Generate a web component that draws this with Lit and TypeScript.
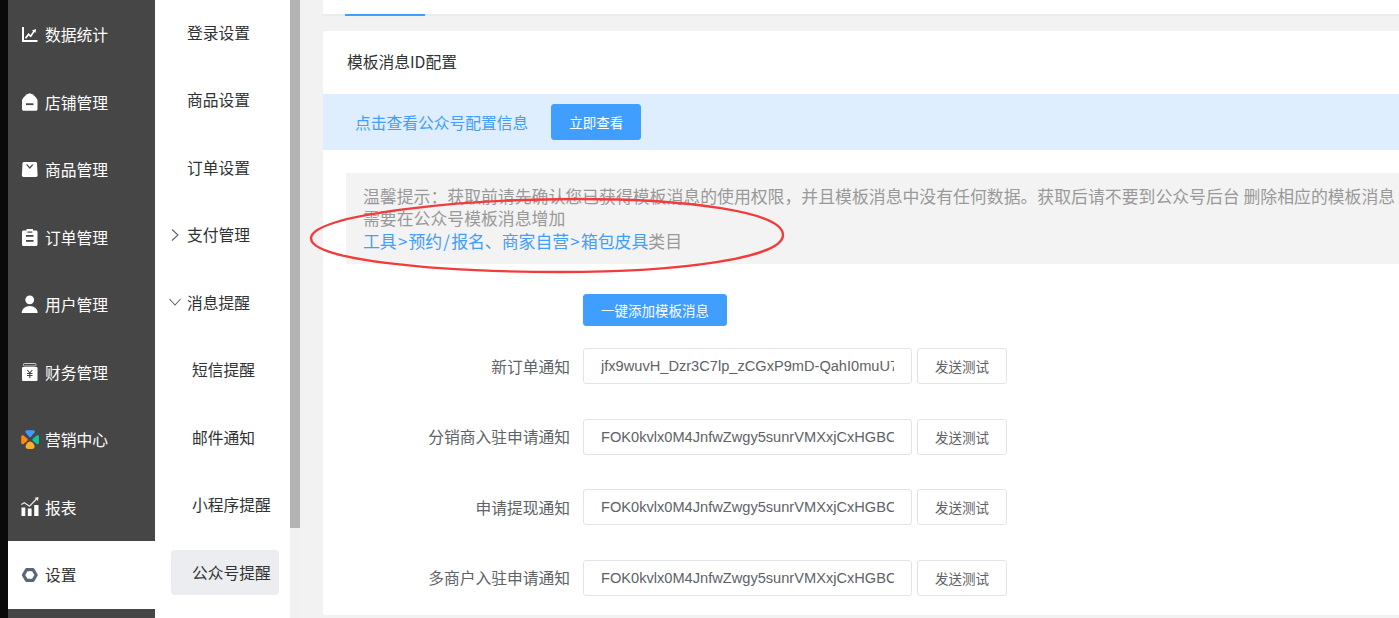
import { LitElement, html, css, svg } from "lit";
import { customElement } from "lit/decorators.js";

const icons: Record<string, unknown> = {
  chart: svg`<path d="M1 2v15h15.500v-2H3V2z" fill="#fff"/><path d="M4 12.500L7.500 8l2 2L12 6.500 11 5.500 15 4l-.5 4-1-1-3.700 5.500-2-2L5 14z" fill="#fff"/>`,
  store: svg`<path d="M8.700 1.200C5 2.200 2.500 5 1 8v9c0 1 .8 1.800 1.700 1.800h12c1 0 1.800-.8 1.800-1.800V8C15 5 12.500 2.200 8.700 1.200z" fill="#fff"/><rect x="5" y="11.300" width="7.500" height="1.800" fill="#464646"/>`,
  box: svg`<path d="M3 2h11.500c.8 0 1.300.6 1.500 1.300l.6 12c0 1-.7 1.700-1.600 1.700H2.500c-.9 0-1.600-.7-1.600-1.700l.6-12C1.700 2.600 2.200 2 3 2z" fill="#fff"/><path d="M5 4.500h1.600L8.800 7l2.200-2.500h1.600L8.800 9z" fill="#464646"/>`,
  clip: svg`<path d="M5.500 2h6.500v1.500h3c.9 0 1.500.7 1.500 1.500v12.500c0 .9-.6 1.500-1.500 1.500H2.500c-.9 0-1.500-.6-1.500-1.500V5c0-.8.600-1.500 1.500-1.500h3z" fill="#fff"/><rect x="5" y="8" width="7.500" height="1.800" fill="#464646"/><rect x="5" y="13" width="7.500" height="1.800" fill="#464646"/><rect x="6.300" y="4.500" width="5" height="1.200" fill="#464646"/>`,
  user: svg`<circle cx="8.700" cy="4.800" r="4.400" fill="#fff"/><path d="M.7 18c0-4 3.500-7 8-7s8 3 8 7z" fill="#fff"/>`,
  fin: svg`<rect x="2.500" y="1.500" width="12.500" height="2.500" rx=".8" fill="none" stroke="#cfcfcf" stroke-width="1"/><rect x="1" y="5" width="15.500" height="14" rx="1" fill="#fff"/><path d="M6.300 8l2.500 3 2.500-3M6 11.500h5.500M6 13.500h5.500M8.800 11v5" fill="none" stroke="#464646" stroke-width="1.100"/>`,
  mkt: svg`<path d="M6 .2h6.200c1.500 0 2 1.300 1.300 2.400L10.300 6.600c-.7.800-1.800.8-2.500 0L4.700 2.600C4 1.500 4.500.2 6 .2z" fill="#3f9bff"/><path d="M.2 6.800v5.800c0 1.500 1.300 2 2.300 1.300l3.700-3c.8-.7.800-1.800 0-2.400L2.500 5.500C1.500 4.800.2 5.300.2 6.800z" fill="#ff8a12"/><path d="M18 6.800v5.800c0 1.500-1.300 2-2.300 1.300l-3.700-3c-.8-.7-.8-1.800 0-2.400l3.700-3c1-.7 2.300-.2 2.300 1.300z" fill="#10c5a0"/><path d="M9.100 11.500c-2 0-4.500 3-4.500 5 0 1.700 1.200 2.500 2.500 2.500h4c1.300 0 2.500-.8 2.500-2.500 0-2-2.500-5-4.500-5z" fill="#ffad2e"/>`,
  rep: svg`<rect x=".5" y="10.500" width="3.800" height="8.500" fill="#fff"/><rect x="6.800" y="11.500" width="3.800" height="7.500" fill="#fff"/><rect x="13.200" y="8" width="4.300" height="11" fill="#fff"/><path d="M.3 7.500l3-1.800 5.200 3.500L15.500 2" fill="none" stroke="#e8e8e8" stroke-width="1.300"/><path d="M13.500.8L17.500 0l-.5 4z" fill="#e8e8e8"/>`,
  gear: svg`<path d="M2.400 10l3.200-5.300h6.400L15.200 10 12 15.300H5.600z" fill="none" stroke="#5b6776" stroke-width="3.200" stroke-linejoin="round"/>`,
};

const menu = [
  ["chart", "数据统计"], ["store", "店铺管理"], ["box", "商品管理"], ["clip", "订单管理"], ["user", "用户管理"],
  ["fin", "财务管理"], ["mkt", "营销中心"], ["rep", "报表"], ["gear", "设置"],
];
const sub: [string, string, string][] = [
  ["登录设置", "", ""], ["商品设置", "", ""], ["订单设置", "", ""], ["支付管理", "right", ""], ["消息提醒", "down", ""],
  ["短信提醒", "", "child"], ["邮件通知", "", "child"], ["小程序提醒", "", "child"], ["公众号提醒", "", "child on"],
];
const A = "FOK0kvlx0M4JnfwZwgy5sunrVMXxjCxHGBC6aT1r";
const rows = [
  ["新订单通知", "jfx9wuvH_Dzr3C7lp_zCGxP9mD-QahI0muU7aT1r"],
  ["分销商入驻申请通知", A], ["申请提现通知", A], ["多商户入驻申请通知", A],
];

@customElement("app-root")
export class AppRoot extends LitElement {
  static styles = css`
    :host { display: block; width: 1399px; height: 618px; overflow: hidden; position: relative; background: #f2f2f2;
      font-family: "Noto Sans CJK SC", "Liberation Sans", sans-serif; font-size: 15.75px; }
    .page { display: flex; height: 618px; }
    .edge { width: 8px; background: #0a0a0a; flex: none; }
    .side { width: 147px; flex: none; background: #464646; padding-top: 1px; }
    .mi { height: 67.5px; display: flex; align-items: center; padding-left: 13px; gap: 6px; color: #fff; }
    .mi svg { width: 18px; height: 20px; flex: none; }
    .mi.on { background: #fff; color: #303133; }
    .subnav { width: 135px; flex: none; background: #fff; margin-top: -1.5px; height: 620px; }
    .si { height: 67.5px; display: flex; align-items: center; padding-left: 32px; color: #303133; position: relative; }
    .si.child { padding-left: 37px; }
    .si.on::before { content: ""; position: absolute; left: 16px; right: 11px; top: 11.5px; height: 45px; background: #ebedf1; border-radius: 4px; }
    .si span { position: relative; }
    .si svg { position: absolute; left: 13px; top: 50%; margin-top: -7px; width: 14px; height: 14px; }
    .bar { width: 10px; flex: none; background: #f1f1f1; }
    .thumb { height: 528px; background: #b3b3b3; }
    .main { flex: 1; min-width: 0; padding-left: 23px; }
    .tabs { height: 16px; background: #fff; border-bottom: 2px solid #e8edf2; box-sizing: border-box; padding-left: 22px; }
    .tab { width: 80px; height: 16px; box-sizing: border-box; border-bottom: 2px solid #409eff; }
    .card { margin-top: 15px; background: #fff; height: 584px; border-radius: 3px 0 0 3px; }
    .title { height: 63px; box-sizing: border-box; padding: 0 0 2px 24px; display: flex; align-items: center; color: #303133; }
    .band { height: 56px; background: #dfeefe; display: flex; align-items: center; padding-left: 32px; gap: 23px; color: #409eff; }
    .btn { background: #409eff; color: #fff; border: 1px solid #409eff; border-radius: 3px; font: inherit; font-size: 13.5px; padding: 0; height: 36px; box-sizing: border-box; }
    .band .btn { width: 90px; }
    .tip { margin: 23px 0 0 23px; height: 91px; box-sizing: border-box; padding: 11.5px 0 0 17px; background: #f3f3f3; color: #999; font-size: 16.875px; line-height: 22.5px; white-space: nowrap; overflow: hidden; }
    .tip a { color: #409eff; text-decoration: none; }
    .sym { padding: 0 1.2px; }
    .form { margin-left: 260px; padding-top: 30px; }
    .add { width: 144px; height: 32px; display: block; }
    .row { display: flex; align-items: center; height: 36px; margin-top: 34.5px; }
    .row:first-of-type { margin-top: 22px; }
    .label { width: 227px; margin-left: -240px; margin-right: 13px; text-align: right; color: #606266; white-space: nowrap; flex: none; }
    input { width: 329px; height: 36px; box-sizing: border-box; border: 1px solid #e2e4e9; border-radius: 3px; padding: 0 17px; font: inherit; font-family: "Liberation Sans", sans-serif; font-size: 14.625px; color: #606266; background: #fff; outline: none; flex: none; }
    .send { margin-left: 5px; width: 90px; height: 36px; box-sizing: border-box; background: #fff; border: 1px solid #e2e4e9; border-radius: 3px; color: #606266; font: inherit; font-size: 13.5px; padding: 0; flex: none; }
    .mark { position: absolute; left: 305px; top: 195px; width: 490px; height: 85px; pointer-events: none; }
  `;

  render() {
    return html`
      <div class="page">
        <div class="edge"></div>
        <nav class="side">
          ${menu.map(([ic, t]) => html`<div class="mi ${t === "设置" ? "on" : ""}">
            <svg viewBox="0 0 18 20">${icons[ic]}</svg><span>${t}</span></div>`)}
        </nav>
        <nav class="subnav">
          ${sub.map(([t, a, c]) => html`<div class="si ${c}">
            ${a === "right" ? html`<svg viewBox="0 0 14 14"><path d="M4 1.500L10 7l-6 5.500" fill="none" stroke="#606266" stroke-width="1.100"/></svg>` : ""}
            ${a === "down" ? html`<svg viewBox="0 0 14 14"><path d="M1.500 4L7 10l5.500-6" fill="none" stroke="#606266" stroke-width="1.100"/></svg>` : ""}
            <span>${t}</span></div>`)}
        </nav>
        <div class="bar"><div class="thumb"></div></div>
        <main class="main">
          <div class="tabs"><div class="tab"></div></div>
          <section class="card">
            <div class="title">模板消息ID配置</div>
            <div class="band"><span>点击查看公众号配置信息</span><button class="btn">立即查看</button></div>
            <div class="tip">温馨提示：获取前请先确认您已获得模板消息的使用权限，并且模板消息中没有任何数据。获取后请不要到公众号后台 删除相应的模板消息<br>需要在公众号模板消息增加<br><a>工具<span class="sym">&gt;</span>预约<span class="sym">/</span>报名、商家自营<span class="sym">&gt;</span>箱包皮具</a>类目</div>
            <div class="form">
              <button class="btn add">一键添加模板消息</button>
              ${rows.map(([l, v]) => html`<div class="row"><span class="label">${l}</span><input readonly .value=${v}><button class="send">发送测试</button></div>`)}
            </div>
          </section>
        </main>
      </div>
      <svg class="mark" viewBox="305 195 490 85"><path d="M312 235C325 214 460 199 577 199C690 199 783 212 783 235C783 258 680 272 560 272C440 272 298 260 312 235Z" fill="none" stroke="#f23c3c" stroke-width="2.400"/></svg>
    `;
  }
}
